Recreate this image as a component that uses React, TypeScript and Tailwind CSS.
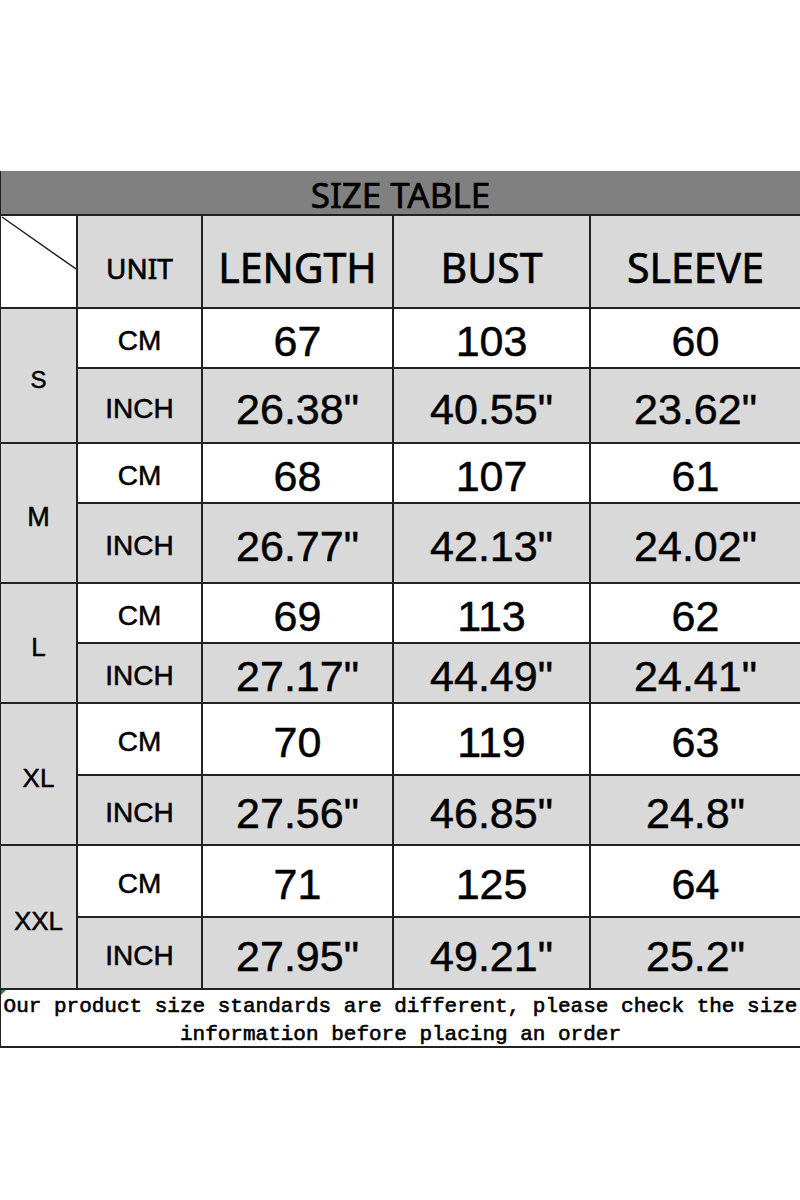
const sans = "font-['Liberation_Sans',Arial,sans-serif] [-webkit-text-stroke:0.5px_#000]";
const head = "font-['Noto_Sans','Open_Sans',sans-serif] [-webkit-text-stroke:0.7px_#000]";

type SizeRow = {
  size: string;
  sizeClass: string;
  cmH: string;
  inH: string;
  cm: string[];
  inch: string[];
};

const rows: SizeRow[] = [
  { size: "S", sizeClass: "text-[24px]", cmH: "h-[58px]", inH: "h-[73px]", cm: ["67", "103", "60"], inch: ['26.38"', '40.55"', '23.62"'] },
  { size: "M", sizeClass: "text-[27px]", cmH: "h-[58px]", inH: "h-[78px]", cm: ["68", "107", "61"], inch: ['26.77"', '42.13"', '24.02"'] },
  { size: "L", sizeClass: "text-[26px]", cmH: "h-[58px]", inH: "h-[58px]", cm: ["69", "113", "62"], inch: ['27.17"', '44.49"', '24.41"'] },
  { size: "XL", sizeClass: "text-[26px]", cmH: "h-[70px]", inH: "h-[68px]", cm: ["70", "119", "63"], inch: ['27.56"', '46.85"', '24.8"'] },
  { size: "XXL", sizeClass: "text-[26px]", cmH: "h-[70px]", inH: "h-[70px]", cm: ["71", "125", "64"], inch: ['27.95"', '49.21"', '25.2"'] },
];

function Cell({ children, grey, className = "" }: { children?: React.ReactNode; grey?: boolean; className?: string }) {
  return (
    <div className={`flex items-center justify-center text-black ${grey ? "bg-[#d9d9d9]" : "bg-white"} ${className}`}>
      {children}
    </div>
  );
}

export default function App() {
  return (
    <div className="min-h-[1200px] w-[800px] bg-white pt-[171px]">
      <div className="grid grid-cols-[75px_123px_189px_195px_1fr] gap-[2px] bg-[#222] pl-[1px] pb-[2px]">
        {/* title band */}
        <div className={`col-span-5 flex h-[43px] items-center justify-center bg-[#808080] text-[35px] text-black ${head}`}>
          <span className="pt-[6px]">SIZE TABLE</span>
        </div>

        {/* header row */}
        <div className="relative h-[91px] bg-white">
          <svg className="absolute inset-0" width="75" height="91" viewBox="0 0 75 91">
            <line x1="1" y1="1" x2="75" y2="53" stroke="#222" strokeWidth="1.5" />
          </svg>
        </div>
        <Cell grey className={`pt-[12px] text-[28px] ${head}`}>UNIT</Cell>
        <Cell grey className={`pt-[12px] text-[41px] ${head}`}>LENGTH</Cell>
        <Cell grey className={`pt-[12px] text-[41px] ${head}`}>BUST</Cell>
        <Cell grey className={`pt-[12px] text-[41px] ${head}`}>SLEEVE</Cell>

        {rows.map((r) => (
          <div key={r.size} className="contents">
            <Cell grey className={`row-span-2 pt-[8px] ${r.sizeClass} ${sans}`}>{r.size}</Cell>
            <Cell className={`${r.cmH} pt-[6px] text-[28px] ${sans}`}>CM</Cell>
            {r.cm.map((v, i) => (
              <Cell key={i} className={`${r.cmH} pt-[7px] text-[43px] ${sans}`}>{v}</Cell>
            ))}
            <Cell grey className={`${r.inH} pt-[6px] text-[28px] ${sans}`}>INCH</Cell>
            {r.inch.map((v, i) => (
              <Cell key={i} grey className={`${r.inH} pt-[7px] text-[43px] ${sans}`}>{v}</Cell>
            ))}
          </div>
        ))}

        {/* footer note */}
        <div className="relative col-span-5 flex h-[56px] flex-col items-center justify-center bg-white">
          <div className="absolute left-0 top-0 h-0 w-0 border-r-[5px] border-t-[5px] border-r-transparent border-t-[#1a8c2a]" />
          <p className="pt-[6px] text-center text-[21px] leading-[28px] text-black font-['Liberation_Mono','Courier_New',monospace] [-webkit-text-stroke:0.6px_#000]">
            Our product size standards are different, please check the size
            <br />
            information before placing an order
          </p>
        </div>
      </div>
    </div>
  );
}
